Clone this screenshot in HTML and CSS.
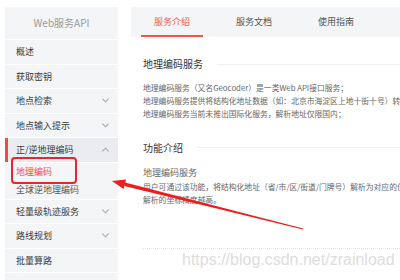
FILE: index.html
```html
<!DOCTYPE html>
<html lang="zh-CN">
<head>
<meta charset="utf-8">
<title>Web服务API - 地理编码</title>
<link rel="stylesheet" href="styles.css">
</head>
<body>
<div class="page">
  <aside class="side">
    <div class="side-head">Web服务API</div>
    <div class="item">概述</div>
    <div class="item">获取密钥</div>
    <div class="item">地点检索<span class="chev"></span></div>
    <div class="item">地点输入提示<span class="chev"></span></div>
    <div class="item active">正/逆地理编码<span class="chev up"></span></div>
    <div class="sub">
      <div class="sub-item current">地理编码</div>
      <div class="sub-item">全球逆地理编码</div>
    </div>
    <div class="item">轻量级轨迹服务<span class="chev"></span></div>
    <div class="item">路线规划<span class="chev"></span></div>
    <div class="item">批量算路</div>
  </aside>
  <main class="main">
    <nav class="tabs">
      <span class="tab active">服务介绍</span>
      <span class="tab">服务文档</span>
      <span class="tab">使用指南</span>
    </nav>
    <section class="content">
      <h2 class="title"><span>地理编码服务</span><i class="rule"></i></h2>
      <div class="para">
        <p>地理编码服务（又名Geocoder）是一类Web API接口服务；</p>
        <p>地理编码服务提供将结构化地址数据（如：北京市海淀区上地十街十号）转换为对应坐标点（经纬度）功能；</p>
        <p>地理编码服务当前未推出国际化服务，解析地址仅限国内；</p>
      </div>
      <h2 class="title second"><span>功能介绍</span><i class="rule"></i></h2>
      <h3 class="subtitle">地理编码服务</h3>
      <div class="para tight">
        <p>用户可通过该功能，将结构化地址（省/市/区/街道/门牌号）解析为对应的位置坐标。地址越详细，</p>
        <p>解析的坐标精度越高。</p>
      </div>
      <div class="dots"></div>
    </section>
  </main>
</div>
<svg class="annot" width="400" height="280" viewBox="0 0 400 280">
  <rect x="12" y="158" width="64" height="25" rx="3" fill="none" stroke="#e8262b" stroke-width="2"/>
  <polygon points="125,182.5 303.1,228.4 302.9,229.6 124.2,185.9" fill="#ee1c1c"/>
  <polygon points="112,181 126,179.6 123.6,189" fill="#ee1c1c"/>
</svg>
<div class="watermark">https://blog.csdn.net/zrainload</div>
</body>
</html>
```
FILE: styles.css
```css
html, body {
  margin: 0;
  padding: 0;
  width: 400px;
  height: 280px;
  overflow: hidden;
  background: #fff;
  font-family: "Noto Sans CJK SC", "Noto Sans", sans-serif;
  color: #333;
}
.page {
  display: flex;
  gap: 13px;
  padding: 7px 0 0 5px;
  height: 273px;
  overflow: hidden;
}
.side {
  width: 113px;
  flex: none;
  background: #f4f5f7;
  overflow: hidden;
}
.side-head {
  height: 32px;
  line-height: 32px;
  text-align: center;
  font-size: 10px;
  color: #9a9a9a;
  border-bottom: 1px solid #fff;
}
.item {
  height: 23.5px;
  border-bottom: 1px solid #fff;
  display: flex;
  align-items: center;
  justify-content: space-between;
  padding: 0 10px 0 11px;
  font-size: 9px;
  color: #3a3a3a;
}
.item.active {
  background: #eaecef;
  box-shadow: inset 3px 0 0 #f04b3f;
}
.chev {
  width: 4px;
  height: 4px;
  border-right: 1px solid #a4a8b4;
  border-bottom: 1px solid #a4a8b4;
  transform: translateY(-1.5px) rotate(45deg);
}
.chev.up {
  transform: translateY(1.5px) rotate(-135deg);
}
.sub {
  height: 36px;
  border-bottom: 1px solid #fff;
}
.sub-item {
  height: 18px;
  line-height: 18px;
  padding-left: 11px;
  font-size: 9px;
  color: #555;
}
.sub-item.current {
  color: #f4483e;
}
.main {
  flex: 1;
  min-width: 0;
  overflow: hidden;
}
.tabs {
  height: 30px;
  background: #f4f5f7;
  display: flex;
  padding-left: 10px;
  gap: 20px;
}
.tab {
  width: 62px;
  height: 30px;
  line-height: 30px;
  text-align: center;
  font-size: 9px;
  color: #555;
  box-sizing: border-box;
}
.tab.active {
  color: #f5604f;
  border-bottom: 2px solid #f5563f;
}
.content {
  padding-left: 12px;
}
.title {
  display: flex;
  align-items: center;
  gap: 14px;
  margin: 20px 0 0;
  font-size: 10px;
  font-weight: normal;
  line-height: 14px;
  color: #333;
  white-space: nowrap;
}
.title.second {
  margin-top: 21px;
}
.rule {
  flex: 1;
  height: 1px;
  background: #efefef;
}
.para {
  margin-top: 9.5px;
}
.para.tight {
  margin-top: 1px;
}
.para p {
  margin: 0;
  font-size: 7.8px;
  line-height: 13px;
  color: #666;
  white-space: nowrap;
}
.subtitle {
  margin: 11.5px 0 0;
  font-size: 9px;
  font-weight: normal;
  line-height: 13px;
  color: #666;
}
.dots {
  margin-top: 42px;
  border-top: 1px dotted #e2e2e2;
}
.annot {
  position: absolute;
  left: 0;
  top: 0;
}
.watermark {
  position: absolute;
  left: 182px;
  top: 251px;
  font-family: "Liberation Sans", Arial, sans-serif;
  font-size: 16px;
  color: #dddddd;
  white-space: nowrap;
}
```
